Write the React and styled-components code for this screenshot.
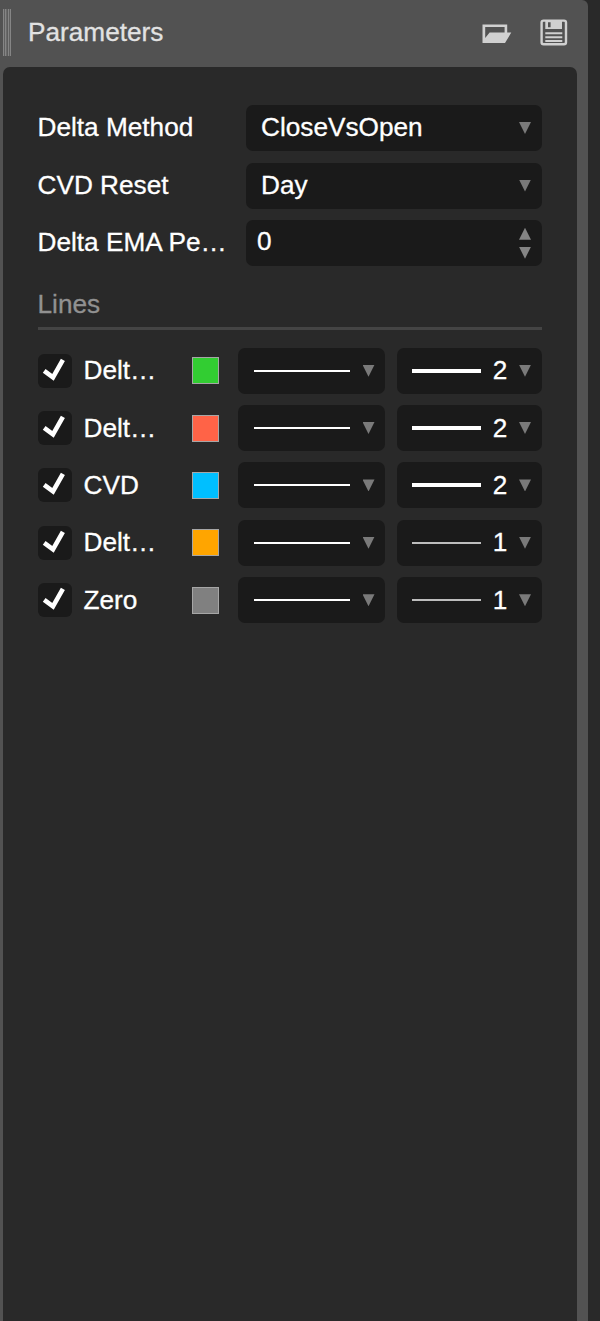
import React from "react";
import styled, { createGlobalStyle } from "styled-components";

const GlobalStyle = createGlobalStyle`
  * { box-sizing: border-box; }
  body {
    margin: 0;
    background: #292929;
    font-family: "Liberation Sans", Arial, sans-serif;
    font-size: 26.2px;
    line-height: 30px;
    color: #fff;
    -webkit-text-stroke: 0.3px currentColor;
  }
`;

const Panel = styled.div`
  display: flex;
  flex-direction: column;
  width: 588px;
  height: 1321px;
  padding: 0 11.5px 0 3px;
  background: #525252;
  border-top-right-radius: 6px;
`;

const Header = styled.header`
  display: flex;
  align-items: flex-start;
  height: 67px;
  flex: none;
`;

const Grip = styled.div`
  width: 8px;
  height: 47px;
  margin-top: 9px;
  background: linear-gradient(
    90deg,
    #858585 0 1px, #606060 1px 2px, #858585 2px 3px, #6a6a6a 3px 4px,
    #5c5c5c 4px 5px, #858585 5px 6px, #606060 6px 7px, #858585 7px 8px
  );
`;

const Title = styled.h1`
  flex: 1;
  margin: 17px 0 0 17px;
  font-size: 26.2px;
  font-weight: 400;
  color: #e2e2e2;
`;

const IconButton = styled.button`
  display: block;
  padding: 0;
  border: 0;
  background: none;
  margin: ${(p) => p.$margin};
  svg { display: block; }
`;

const Body = styled.main`
  flex: 1;
  padding: 38px 34.5px 0 34.5px;
  background: #292929;
  border-radius: 7px 7px 0 0;
`;

const Fields = styled.div`
  display: flex;
  flex-direction: column;
  gap: 11.6px;
`;

const FieldRow = styled.div`
  display: flex;
  align-items: center;
  height: 46px;
`;

const FieldLabel = styled.div`
  width: 208.5px;
  padding-bottom: 2px;
  white-space: nowrap;
`;

const Box = styled.div`
  display: flex;
  align-items: center;
  height: 46px;
  border-radius: 7px;
  background: #1a1a1a;
`;

const ValueBox = styled(Box)`
  flex: 1;
  justify-content: space-between;
  padding: 0 11px 0 ${(p) => p.$inset}px;
`;

const Value = styled.span`
  padding-bottom: ${(p) => p.$lift || 2}px;
`;

const Spinner = styled.div`
  display: flex;
  flex-direction: column;
  gap: 7px;
`;

const Arrow = styled.div`
  flex: none;
  width: 12px;
  height: 12px;
  background: ${(p) => p.$tone || "#7a7a7a"};
  clip-path: ${(p) => (p.$up ? "polygon(50% 0, 100% 100%, 0 100%)" : "polygon(0 0, 100% 0, 50% 100%)")};
`;

const SectionTitle = styled.h2`
  height: 63.5px;
  margin: 0 0 18px;
  padding-top: 23px;
  border-bottom: 3px solid #444;
  font-size: 26.2px;
  font-weight: 400;
  color: #919191;
`;

const Lines = styled.div`
  display: flex;
  flex-direction: column;
  gap: 11.4px;
`;

const LineRow = styled.div`
  display: flex;
  align-items: center;
  height: 46px;
`;

const Check = styled.div`
  width: 34px;
  height: 34px;
  border-radius: 6px;
  background: #1a1a1a;
  svg { display: block; }
`;

const LineName = styled.div`
  width: 108.5px;
  margin-left: 12px;
  padding-bottom: 1px;
  white-space: nowrap;
`;

const Swatch = styled.div`
  width: 27px;
  height: 27px;
  margin-right: 19px;
  border: 1.6px solid #a6a6a6;
  background: ${(p) => p.$color};
`;

const StyleBox = styled(Box)`
  width: 147px;
  margin-right: 12px;
  padding: 0 10.5px 0 16px;
  justify-content: space-between;
`;

const WidthBox = styled(Box)`
  width: 145px;
  padding: 0 11px 0 15px;
  justify-content: space-between;
`;

const Stroke = styled.div`
  width: ${(p) => p.$length}px;
  height: ${(p) => (p.$bold ? 4 : 2)}px;
  background: ${(p) => p.$tone || "#fff"};
`;

const lines = [
  { name: "Delt…", color: "#32cd32", width: 2 },
  { name: "Delt…", color: "#ff6347", width: 2 },
  { name: "CVD", color: "#00bfff", width: 2 },
  { name: "Delt…", color: "#ffa500", width: 1 },
  { name: "Zero", color: "#808080", width: 1 },
];

const FolderIcon = () => (
  <svg width="30" height="20" viewBox="0 0 30 20">
    <path fill="#d0d0d0" fillRule="evenodd" d="M.5 .5H25.2V8.5H29.3L23 19H.5ZM3.2 3V14L7.6 8.5H22.6V3Z" />
  </svg>
);

const SaveIcon = () => (
  <svg width="28" height="27" viewBox="0 0 28 27">
    <rect x="1.6" y="1.6" width="24.4" height="23.6" rx="2" fill="none" stroke="#d0d0d0" strokeWidth="2.4" />
    <path fill="#d0d0d0" fillRule="evenodd" d="M5.3 1H22V10H5.3ZM8 3.3V8.2H10.6V3.3Z" />
    <path stroke="#d0d0d0" strokeWidth="2.1" d="M5.3 14.2H22.3M5.3 18.2H22.3M5.3 22H22.3" />
  </svg>
);

const Tick = () => (
  <svg width="34" height="34" viewBox="0 0 34 34">
    <path d="M6.2 16.8L15 23.4L24.9 5.9" fill="none" stroke="#fff" strokeWidth="4.6" />
  </svg>
);

export default function App() {
  return (
    <>
      <GlobalStyle />
      <Panel>
        <Header>
          <Grip />
          <Title>Parameters</Title>
          <IconButton aria-label="Open" $margin="24px 28px 0 0"><FolderIcon /></IconButton>
          <IconButton aria-label="Save" $margin="19px 8.5px 0 0"><SaveIcon /></IconButton>
        </Header>
        <Body>
          <Fields>
            <FieldRow>
              <FieldLabel>Delta Method</FieldLabel>
              <ValueBox $inset={15}><Value>CloseVsOpen</Value><Arrow /></ValueBox>
            </FieldRow>
            <FieldRow>
              <FieldLabel>CVD Reset</FieldLabel>
              <ValueBox $inset={15}><Value>Day</Value><Arrow /></ValueBox>
            </FieldRow>
            <FieldRow>
              <FieldLabel>Delta EMA Pe…</FieldLabel>
              <ValueBox $inset={11}>
                <Value $lift={5}>0</Value>
                <Spinner><Arrow $up $tone="#858585" /><Arrow $tone="#858585" /></Spinner>
              </ValueBox>
            </FieldRow>
          </Fields>
          <SectionTitle>Lines</SectionTitle>
          <Lines>
            {lines.map((line, i) => (
              <LineRow key={i}>
                <Check><Tick /></Check>
                <LineName>{line.name}</LineName>
                <Swatch $color={line.color} />
                <StyleBox><Stroke $length={96} /><Arrow /></StyleBox>
                <WidthBox>
                  <Stroke $length={69} $bold={line.width === 2} $tone={line.width === 1 ? "#bdbdbd" : "#fff"} />
                  <Value $lift={1}>{line.width}</Value>
                  <Arrow />
                </WidthBox>
              </LineRow>
            ))}
          </Lines>
        </Body>
      </Panel>
    </>
  );
}
